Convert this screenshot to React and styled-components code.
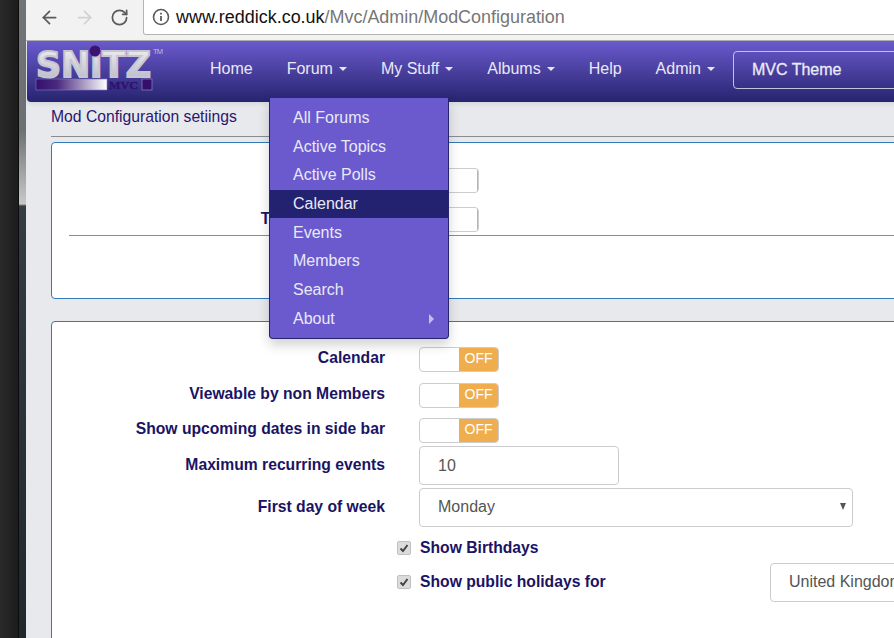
import React from "react";
import styled, { createGlobalStyle } from "styled-components";
import { ArrowLeft, ArrowRight, RotateCw } from "lucide-react";

const GlobalStyle = createGlobalStyle`
  html, body {
    margin: 0;
    padding: 0;
    height: 100%;
    overflow: hidden;
    background: #222;
    font-family: "Liberation Sans", Arial, sans-serif;
    font-size: 16px;
  }
`;

const Screen = styled.div`
  display: flex;
  width: 894px;
  height: 638px;
  overflow: hidden;
`;

const Desktop = styled.div`
  flex: none;
  width: 18px;
  background: linear-gradient(90deg, #2a2a2a, #1c1c1c);
`;

const WindowEdge = styled.div`
  flex: none;
  width: 8px;
  border-left: 1px solid #0c0c0c;
  box-sizing: border-box;
  background: linear-gradient(
    180deg,
    #707476 0,
    #6c7072 130px,
    #c8c8c8 204px,
    #343c44 206px,
    #20282e 638px
  );
`;

const Browser = styled.div`
  flex: none;
  width: 1120px;
  display: flex;
  flex-direction: column;
  background: #e8e9ec;
`;

const Toolbar = styled.div`
  height: 41px;
  box-sizing: border-box;
  flex: none;
  display: flex;
  align-items: flex-start;
  background: #f2f2f2;
  border-bottom: 1px solid #b0b0b0;
`;

const ToolButton = styled.span`
  flex: none;
  width: 35px;
  height: 34px;
  display: flex;
  align-items: center;
  justify-content: center;
  color: ${(p) => (p.$off ? "#d2d2d2" : "#5a5a5a")};
`;

const Tools = styled.div`
  flex: none;
  width: 117px;
  padding-left: 6px;
  box-sizing: border-box;
  display: flex;
`;

const AddressBar = styled.div`
  flex: 1;
  height: 35px;
  box-sizing: border-box;
  display: flex;
  align-items: center;
  gap: 6px;
  padding: 0 0 0 8px;
  background: #fff;
  border: 1px solid #b4b4b4;
  border-top: 0;
  border-radius: 0 0 0 3px;
  font-size: 17.95px;
  white-space: nowrap;
`;

const Host = styled.span`
  color: #111;
`;

const UrlPath = styled.span`
  color: #767676;
`;

const Navbar = styled.nav`
  flex: none;
  height: 61px;
  margin-left: 1px;
  display: flex;
  align-items: center;
  background: linear-gradient(180deg, #6a5acd 0%, #27246f 100%);
  border-radius: 0 0 0 4px;
  box-shadow: 0 2px 4px rgba(0, 0, 0, 0.08);
  position: relative;
`;

const Brand = styled.div`
  flex: none;
  width: 166px;
  height: 61px;
`;

const NavLink = styled.a`
  flex: none;
  padding: 0 17px;
  margin-bottom: 6px;
  display: flex;
  align-items: center;
  gap: 6px;
  color: #e9e9f4;
  font-size: 16px;
`;

const Caret = styled.span`
  width: 0;
  height: 0;
  border-left: 4px solid transparent;
  border-right: 4px solid transparent;
  border-top: 4px solid #e9e9f4;
`;

const ThemePicker = styled.div`
  flex: none;
  width: 300px;
  height: 38px;
  margin: 0 0 3px 1px;
  box-sizing: border-box;
  border: 1px solid #c4c4d8;
  border-radius: 4px;
  padding-left: 18px;
  display: flex;
  align-items: center;
  color: #ecebf6;
  font-size: 16px;
  -webkit-text-stroke: 0.3px #ecebf6;
`;

const Menu = styled.ul`
  position: absolute;
  left: 242px;
  top: 57px;
  width: 180px;
  margin: 0;
  padding: 5.6px 0 5px;
  box-sizing: border-box;
  list-style: none;
  background: #6a5acd;
  border: 1px solid #27246f;
  border-top: 0;
  border-radius: 0 0 4px 4px;
  box-shadow: 0 6px 12px rgba(0, 0, 0, 0.18);
  z-index: 5;
`;

const MenuItem = styled.li`
  height: 28.7px;
  padding: 0 14px 0 23px;
  display: flex;
  align-items: center;
  justify-content: space-between;
  color: #e9e9f4;
  background: ${(p) => (p.$active ? "#232270" : "transparent")};
`;

const SubArrow = styled.span`
  width: 0;
  height: 0;
  border-top: 5px solid transparent;
  border-bottom: 5px solid transparent;
  border-left: 5px solid #c4c0e4;
`;

const Content = styled.main`
  flex: 1;
  padding: 0 0 0 25px;
`;

const PageTitle = styled.div`
  height: 35px;
  box-sizing: border-box;
  padding-top: 6px;
  line-height: 18px;
  color: #2a1670;
  font-size: 15.7px;
  border-bottom: 1px solid #8c8c8c;
`;

const Card = styled.section`
  margin-top: ${(p) => p.$top}px;
  height: ${(p) => p.$height}px;
  padding-top: 25px;
  box-sizing: border-box;
  background: #fff;
  border: 1px solid #337ab7;
  border-radius: 4px;
`;

const Row = styled.div`
  display: grid;
  grid-template-columns: 333px 1fr;
  column-gap: 34px;
  align-items: center;
  margin-bottom: ${(p) => p.$after || 0}px;
`;

const FieldLabel = styled.label`
  text-align: right;
  font-weight: 700;
  font-size: 15.7px;
  padding-bottom: ${(p) => p.$lift ?? 3}px;
  color: #1a1464;
  white-space: nowrap;
`;

const Rule = styled.hr`
  margin: 3.5px 0 0 17px;
  border: 0;
  border-top: 1px solid #8c8c8c;
`;

const Switch = styled.div`
  width: ${(p) => p.$width || 80}px;
  height: 24.5px;
  box-sizing: border-box;
  display: flex;
  justify-content: flex-end;
  background: #fff;
  border: 1px solid #ccc;
  border-radius: 4px;
  overflow: hidden;
`;

const SwitchOff = styled.span`
  width: ${(p) => p.$width || 39}px;
  padding-bottom: 2px;
  box-sizing: border-box;
  display: flex;
  align-items: center;
  justify-content: center;
  background: #f0ad4e;
  color: #fff;
  font-size: 14px;
`;

const TextField = styled.input`
  width: ${(p) => p.$width}px;
  height: 39px;
  box-sizing: border-box;
  padding: 0 18px;
  background: #fff;
  border: 1px solid #ccc;
  border-radius: 4px;
  color: #555;
  font: 16px "Liberation Sans", Arial, sans-serif;
`;

const SelectBox = styled.div`
  width: ${(p) => p.$width}px;
  height: 38.5px;
  box-sizing: border-box;
  padding: 0 18px 1px;
  display: flex;
  align-items: center;
  justify-content: space-between;
  flex: none;
  background: #fff;
  border: 1px solid #ccc;
  border-radius: 4px;
  color: #555;
  font-size: 16px;
  white-space: nowrap;
`;

const SelectArrow = styled.span`
  margin-right: -12px;
  width: 0;
  height: 0;
  border-left: 3.5px solid transparent;
  border-right: 3.5px solid transparent;
  border-top: 7px solid #555;
`;

const CheckRow = styled.div`
  display: flex;
  align-items: center;
  height: ${(p) => p.$height}px;
  margin-left: 345px;
`;

const CheckBox = styled.span`
  flex: none;
  width: 12px;
  height: 12px;
  display: flex;
  align-items: center;
  justify-content: center;
  background: #dcdcdc;
  border: 1px solid #c0c0c0;
  border-radius: 2px;
  margin: 0 9px 2px 0;
`;

const CheckLabel = styled(FieldLabel)`
  flex: none;
  width: 350px;
  text-align: left;
`;

const Logo = () => (
  <svg width="166" height="61" viewBox="0 0 166 61">
    <defs>
      <linearGradient id="snitzFill" x1="0" y1="0" x2="0" y2="1">
        <stop offset="0" stopColor="#f4f4f6" />
        <stop offset="1" stopColor="#b4b2c4" />
      </linearGradient>
      <linearGradient id="snitzBar" x1="0" y1="0" x2="1" y2="0">
        <stop offset="0" stopColor="#34106c" />
        <stop offset="0.3" stopColor="#4a2a80" />
        <stop offset="1" stopColor="#ffffff" />
      </linearGradient>
    </defs>
    <text
      x="9"
      y="36"
      textLength="115"
      lengthAdjust="spacingAndGlyphs"
      fontFamily="DejaVu Sans, sans-serif"
      fontWeight="700"
      fontSize="36"
      fill="url(#snitzFill)"
      stroke="#c6c6d0"
      strokeWidth="2"
    >
      SNiTZ
    </text>
    <circle cx="68" cy="10" r="5.5" fill="#3a1470" />
    <text x="126" y="13" fontFamily="Liberation Sans, sans-serif" fontSize="7.5" fill="#c0bfd0" textLength="10">
      TM
    </text>
    <rect x="9" y="38" width="71" height="11" fill="url(#snitzBar)" stroke="#8878b8" strokeWidth="0.6" />
    <text
      x="82"
      y="48"
      fontFamily="Liberation Serif, serif"
      fontWeight="700"
      fontSize="11"
      fill="#2e1270"
      stroke="#2e1270"
      strokeWidth="0.4"
      textLength="29"
      lengthAdjust="spacingAndGlyphs"
    >
      MVC
    </text>
    <rect x="115" y="38" width="10" height="11" fill="#34106c" stroke="#8878b8" strokeWidth="0.8" />
  </svg>
);

const InfoIcon = () => (
  <svg width="18" height="18" viewBox="0 0 18 18" fill="none" stroke="#5a5a5a">
    <circle cx="9" cy="9" r="7.5" strokeWidth="1.6" />
    <path d="M9 8v5" strokeWidth="1.8" />
    <path d="M9 4.8v1.8" strokeWidth="1.8" />
  </svg>
);

const TickIcon = () => (
  <svg width="10" height="10" viewBox="0 0 10 10" fill="none" stroke="#444" strokeWidth="2">
    <path d="M1.5 5.5 4 8l4.5-6" />
  </svg>
);

const forumMenu = ["All Forums", "Active Topics", "Active Polls", "Calendar", "Events", "Members", "Search", "About"];

export default function App() {
  return (
    <Screen>
      <GlobalStyle />
      <Desktop />
      <WindowEdge />
      <Browser>
        <Toolbar>
          <Tools>
            <ToolButton><ArrowLeft size={21} strokeWidth={2} /></ToolButton>
            <ToolButton $off><ArrowRight size={21} strokeWidth={2} /></ToolButton>
            <ToolButton><RotateCw size={19} strokeWidth={2.2} /></ToolButton>
          </Tools>
          <AddressBar>
            <InfoIcon />
            <span>
              <Host>www.reddick.co.uk</Host>
              <UrlPath>/Mvc/Admin/ModConfiguration</UrlPath>
            </span>
          </AddressBar>
        </Toolbar>

        <Navbar>
          <Brand><Logo /></Brand>
          <NavLink>Home</NavLink>
          <NavLink>Forum <Caret /></NavLink>
          <NavLink>My Stuff <Caret /></NavLink>
          <NavLink>Albums <Caret /></NavLink>
          <NavLink>Help</NavLink>
          <NavLink>Admin <Caret /></NavLink>
          <ThemePicker>MVC Theme</ThemePicker>
          <Menu>
            {forumMenu.map((item) => (
              <MenuItem key={item} $active={item === "Calendar"}>
                {item}
                {item === "About" && <SubArrow />}
              </MenuItem>
            ))}
          </Menu>
        </Navbar>

        <Content>
          <PageTitle>Mod Configuration setiings</PageTitle>
          <Card $top={5} $height={157}>
            <Row $after={14.5}>
              <span />
              <Switch $width={60}><SwitchOff $width={1} /></Switch>
            </Row>
            <Row>
              <FieldLabel $lift={0}>Topic Moderated</FieldLabel>
              <Switch $width={60}><SwitchOff $width={1} /></Switch>
            </Row>
            <Rule />
          </Card>
          <Card $top={22} $height={400}>
            <Row $after={11.5}>
              <FieldLabel>Calendar</FieldLabel>
              <Switch><SwitchOff>OFF</SwitchOff></Switch>
            </Row>
            <Row $after={10.5}>
              <FieldLabel>Viewable by non Members</FieldLabel>
              <Switch><SwitchOff>OFF</SwitchOff></Switch>
            </Row>
            <Row $after={3.5}>
              <FieldLabel>Show upcoming dates in side bar</FieldLabel>
              <Switch><SwitchOff>OFF</SwitchOff></Switch>
            </Row>
            <Row $after={3}>
              <FieldLabel $lift={1}>Maximum recurring events</FieldLabel>
              <TextField $width={200} defaultValue="10" readOnly />
            </Row>
            <Row $after={3}>
              <FieldLabel $lift={1}>First day of week</FieldLabel>
              <SelectBox $width={434}>Monday <SelectArrow /></SelectBox>
            </Row>
            <CheckRow $height={38}>
              <CheckBox><TickIcon /></CheckBox>
              <CheckLabel $lift={1}>Show Birthdays</CheckLabel>
            </CheckRow>
            <CheckRow $height={30}>
              <CheckBox><TickIcon /></CheckBox>
              <CheckLabel $lift={1}>Show public holidays for</CheckLabel>
              <SelectBox $width={200}>United Kingdom</SelectBox>
            </CheckRow>
          </Card>
        </Content>
      </Browser>
    </Screen>
  );
}
